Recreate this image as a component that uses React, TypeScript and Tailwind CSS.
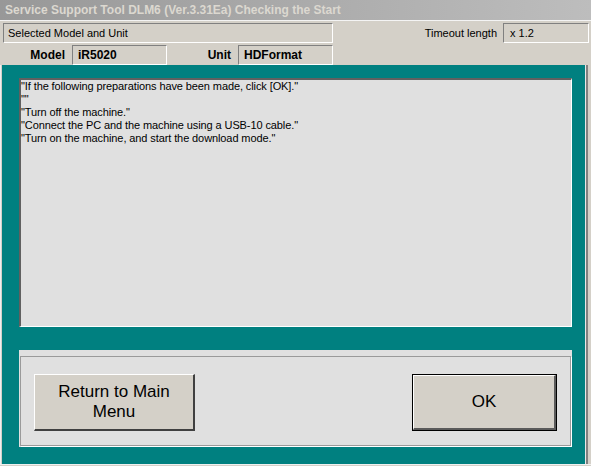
const sunken = 'border-t border-l border-t-[#808080] border-l-[#808080] border-b border-r border-b-white border-r-white';

const lines = [
  '"If the following preparations have been made, click [OK]."',
  '""',
  '"Turn off the machine."',
  '"Connect the PC and the machine using a USB-10 cable."',
  '"Turn on the machine, and start the download mode."',
];

export default function App() {
  return (
    <div className="w-[591px] h-[466px] flex flex-col bg-[#d4d0c8] overflow-hidden font-['Liberation_Sans',Arial,sans-serif] text-black">
      {/* title bar */}
      <div className="h-[20px] flex items-center pl-[5px] bg-gradient-to-r from-[#989898] to-[#bdbdbd] text-[#dcd8d0] text-[12px] font-bold whitespace-nowrap">
        Service Support Tool DLM6 (Ver.3.31Ea) Checking the Start
      </div>

      {/* selected model header */}
      <div className="h-[45px] border-t border-t-[#f4f4f4] pt-[2px] text-[11px]">
        <div className="h-[20px] flex items-center">
          <div className={`ml-[3px] w-[330px] h-[20px] flex items-center pl-[4px] ${sunken}`}>
            Selected Model and Unit
          </div>
          <div className="flex-1 text-right pr-[6px]">Timeout length</div>
          <div className={`w-[86px] h-[20px] flex items-center pl-[6px] mr-[2px] ${sunken}`}>x 1.2</div>
        </div>
        <div className="h-[20px] mt-[2px] flex items-center font-bold text-[12px]">
          <div className="w-[66px] text-right pr-[1px]">Model</div>
          <div className={`ml-[6px] w-[95px] h-[20px] flex items-center pl-[5px] ${sunken}`}>iR5020</div>
          <div className="w-[64px] text-right">Unit</div>
          <div className={`ml-[7px] w-[95px] h-[20px] flex items-center pl-[5px] ${sunken}`}>HDFormat</div>
        </div>
      </div>

      {/* teal client area */}
      <div className="flex-1 flex">
        <div className="w-[2px] border-l border-l-[#f0f0f0]" />
        <div className="flex-1 bg-[#008080] pl-[17px] pr-[13px] pt-[13px] pb-[17px] flex flex-col">
          <div className="h-[249px] bg-[#e0e0e0] border-t-2 border-l-2 border-t-[#606060] border-l-[#606060] border-b border-r border-b-white border-r-white text-[11px] leading-[13px] tracking-[-0.1px] whitespace-pre">
            {lines.map((l, i) => (
              <div key={i}>{l}</div>
            ))}
          </div>

          <div className="mt-[23px] h-[97px] bg-[#e0e0e0] pt-[6px] px-[1px]">
            <div className="h-[90px] border border-[#9a9a9a] shadow-[1px_1px_0_#ffffff] flex items-start justify-between pt-[17px] px-[13px]">
              <button className="w-[161px] h-[57px] bg-[#d4d0c8] border-t border-l border-t-white border-l-white border-b-2 border-r-2 border-b-[#404040] border-r-[#404040] text-[17px] leading-[20px] text-center">
                Return to Main
                <br />
                Menu
              </button>
              <button className="w-[145px] h-[57px] border border-black">
                <div className="w-full h-full bg-[#d4d0c8] border-t border-l border-t-white border-l-white border-b-2 border-r-2 border-b-[#5a5a5a] border-r-[#5a5a5a] flex items-center justify-center text-[17px]">
                  OK
                </div>
              </button>
            </div>
          </div>
        </div>
        <div className="w-[6px] border-l border-l-[#e8e8e8] flex">
          <div className="w-[2px] bg-[#808080]" />
          <div className="flex-1 bg-[#d4d0c8]" />
        </div>
      </div>
      <div className="h-[2px] border-t border-t-[#f0f0f0]" />
    </div>
  );
}
